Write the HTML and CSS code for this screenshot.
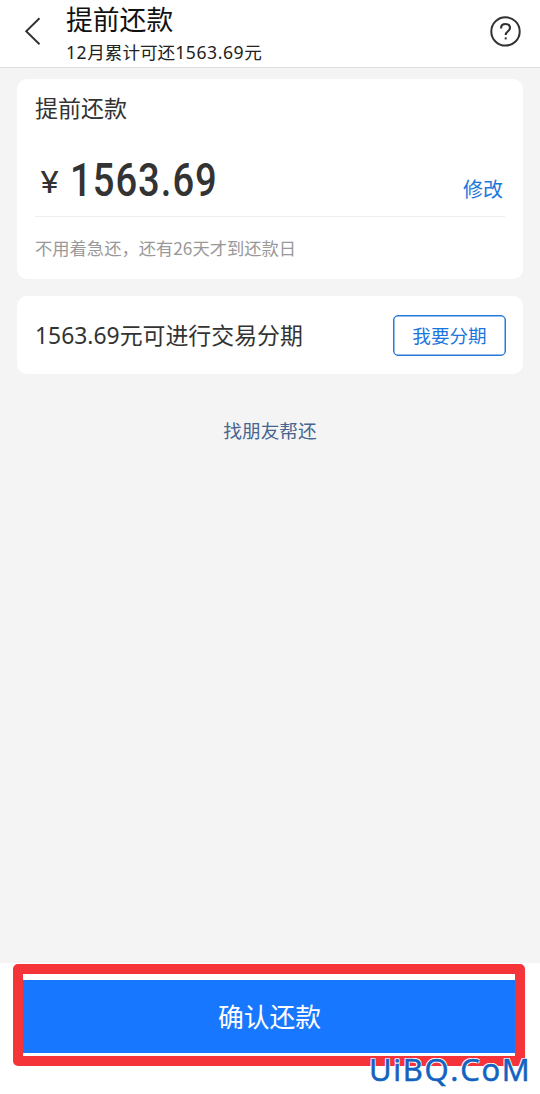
FILE: index.html
```html
<!DOCTYPE html>
<html lang="zh-CN">
<head>
<meta charset="utf-8">
<meta name="viewport" content="width=device-width, initial-scale=1">
<title>提前还款</title>
<link rel="stylesheet" href="styles.css">
</head>
<body>
<div class="page">
  <header class="header">
    <svg class="back" width="18" height="30" viewBox="0 0 18 30" fill="none" stroke="#303133" stroke-width="1.9"><path d="M15.5 2.3 2.2 15.2 15.5 28.2"/></svg>
    <div class="heading">
      <h1 class="title">提前还款</h1>
      <p class="subtitle"><span class="num">12</span>月累计可还<span class="num">1563.69</span>元</p>
    </div>
    <svg class="help" width="32" height="32" viewBox="0 0 32 32" fill="none" stroke="#303133"><circle cx="16.5" cy="16.4" r="14.2" stroke-width="2"/><path d="M12.1 13.4V13C12.1 10.5 13.9 9 16.5 9s4.5 1.6 4.5 4.1c0 3.3-4.3 3-4.3 6.8" stroke-width="2.1"/><path d="M15.7 22.4h2v2h-2z" fill="#303133" stroke="none"/></svg>
  </header>
  <main class="content">
    <section class="card amount-card">
      <h2 class="card-title">提前还款</h2>
      <div class="amount-row">
        <span class="yen">¥</span><span class="amount">1563.69</span>
        <a class="edit">修改</a>
      </div>
      <p class="note">不用着急还，还有26天才到还款日</p>
    </section>
    <section class="card installment">
      <span class="installment-text"><span class="num">1563.69</span>元可进行交易分期</span>
      <button class="outline-button">我要分期</button>
    </section>
    <a class="friend">找朋友帮还</a>
  </main>
  <footer class="footer">
    <div class="highlight"><button class="confirm">确认还款</button></div>
    <span class="watermark">UiBQ.CoM</span>
  </footer>
</div>
</body>
</html>
```
FILE: styles.css
```css
* { box-sizing: border-box; }
body, h1, h2, p { margin: 0; font-weight: 400; }
button { padding: 0; font-family: inherit; }
body { background: #fff; font-family: "Noto Sans CJK SC", sans-serif; color: #333; }
.page { width: 540px; height: 1094px; display: flex; flex-direction: column; overflow: hidden; white-space: nowrap; }
.num { font-family: "Noto Sans", sans-serif; }

.header { height: 68px; flex: none; display: flex; padding: 0 19px 0 24px; border-bottom: 1px solid #dedfe0; }
.back { margin-top: 16px; flex: none; }
.heading { flex: 1; padding: 2px 0 0 24px; color: #111; }
.title { font-size: 26.8px; line-height: 34px; }
.subtitle { padding-top: 1px; font-size: 17.6px; line-height: 30px; color: #222; }
.subtitle .num { letter-spacing: .55px; }
.help { margin-top: 15px; flex: none; }

.content { flex: 1; display: flex; flex-direction: column; padding: 11px 17px 0; background: #f4f4f5; }
.card { background: #fff; border-radius: 10px; }
.amount-card { height: 200px; padding: 11px 18px 0; }
.card-title { font-size: 23px; line-height: 35px; }
.amount-row { height: 92px; display: flex; border-bottom: 1px solid #eee; }
.yen { width: 35px; padding: 41px 0 0 5px; font-family: Roboto, sans-serif; font-size: 32px; line-height: 32px; transform: scaleX(1.08); transform-origin: left; }
.amount { padding-top: 27px; font-family: Roboto, sans-serif; font-size: 46px; line-height: 56px; font-weight: 500; transform: scaleX(.83); transform-origin: left; letter-spacing: 1.2px; }
.edit { margin-left: auto; padding: 47px 2px 0 0; font-size: 20px; line-height: 34px; color: #1b76dc; }
.note { padding-top: 15px; font-size: 17.3px; line-height: 32px; color: #999; }

.installment { height: 78px; margin-top: 17px; padding: 0 17px 0 18px; display: flex; align-items: center; justify-content: space-between; }
.installment-text { font-size: 22.9px; padding-bottom: 2px; }
.outline-button { width: 113px; height: 41px; padding-bottom: 2px; border: 1.5px solid #2878d8; border-radius: 5px; background: #fff; color: #1b76dc; font-size: 18.6px; line-height: 37px; box-shadow: inset 0 0 0 .5px #2878d8; }
.friend { margin: 41px auto 0; font-size: 18.7px; line-height: 30px; color: #46658f; }

.footer { height: 131px; flex: none; position: relative; padding: 1px 15px 0 13px; }
.highlight { height: 102px; padding-top: 6px; border: 10px solid #f43438; border-radius: 5px; }
.confirm { display: block; width: 100%; height: 73px; padding: 0 0 2px 1px; border: 0; background: #1778ff; color: #fff; font-size: 25.8px; }
.watermark { position: absolute; left: 369px; top: 87px; font-family: "Open Sans", sans-serif; font-size: 31px; line-height: 38px; color: #1262c0; letter-spacing: 1.7px; -webkit-text-stroke: .6px #1262c0; text-shadow: -1px -1px #fff, 1px -1px #fff, -1px 1px #fff, 1px 1px #fff; }
```
